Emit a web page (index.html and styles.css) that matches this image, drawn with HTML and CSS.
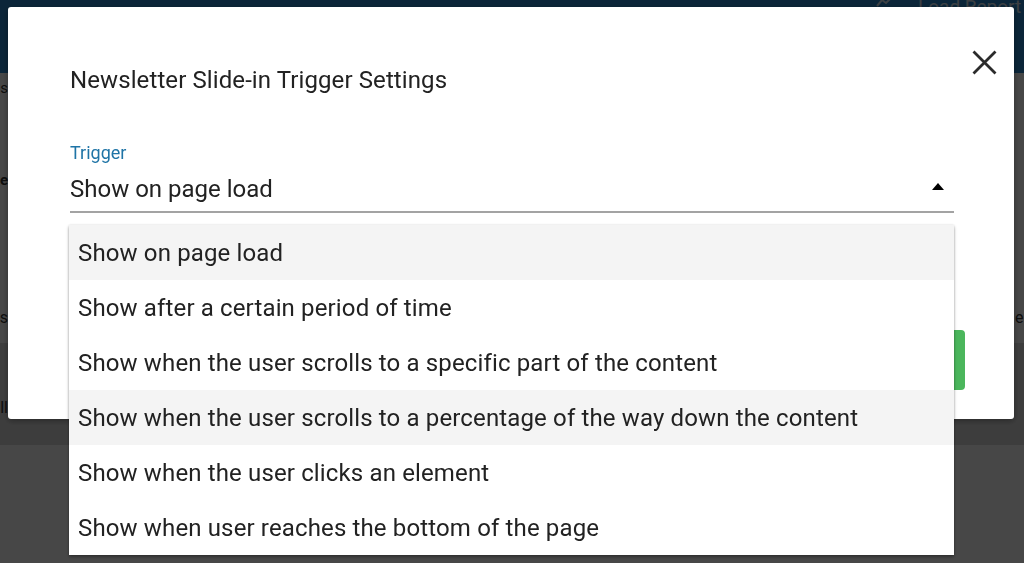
FILE: index.html
```html
<!DOCTYPE html>
<html lang="en">
<head>
<meta charset="utf-8">
<title>Newsletter Slide-in Trigger Settings</title>
<link rel="stylesheet" href="styles.css">
</head>
<body>
  <div class="page">
    <header class="topbar">
      <svg class="topbar-icon" width="18" height="14" viewBox="0 0 18 14" aria-hidden="true"><path d="M1 12 L6 6 L10 9 L17 2" fill="none" stroke="#d8e6f3" stroke-width="2"/></svg>
      <span class="topbar-link">Load Report</span>
    </header>
    <div class="row row-main">
      <div class="edge edge-left">
        <span class="edge-a">s</span>
        <span class="edge-b">e</span>
        <span class="edge-c">s</span>
      </div>
      <div class="middle"></div>
      <div class="edge edge-right">
        <span class="edge-d">e</span>
      </div>
    </div>
    <div class="row row-band">
      <div class="edge edge-left">
        <span class="edge-e">ll</span>
      </div>
    </div>
    <div class="row row-rest"></div>
  </div>

  <div class="overlay">
    <div class="dialog" role="dialog" aria-label="Newsletter Slide-in Trigger Settings">
      <h2 class="dialog-title">Newsletter Slide-in Trigger Settings</h2>
      <button class="dialog-close" aria-label="Close">
        <svg width="25" height="25" viewBox="0 0 25 25"><path d="M1.5 1.5 L23.5 23.5 M23.5 1.5 L1.5 23.5" stroke="#2b2b2b" stroke-width="2.8" fill="none"/></svg>
      </button>
      <div class="field">
        <label class="field-label">Trigger</label>
        <div class="select">
          <span class="select-value">Show on page load</span>
          <span class="caret"></span>
        </div>
        <ul class="menu">
          <li class="menu-item is-selected">Show on page load</li>
          <li class="menu-item">Show after a certain period of time</li>
          <li class="menu-item">Show when the user scrolls to a specific part of the content</li>
          <li class="menu-item is-hover">Show when the user scrolls to a percentage of the way down the content</li>
          <li class="menu-item">Show when the user clicks an element</li>
          <li class="menu-item">Show when user reaches the bottom of the page</li>
        </ul>
      </div>
      <div class="actions">
        <button class="save-btn">Save</button>
      </div>
    </div>
  </div>
</body>
</html>
```
FILE: styles.css
```css
* { box-sizing: border-box; margin: 0; padding: 0; }

html, body {
  width: 1024px;
  height: 563px;
  overflow: hidden;
}

body {
  position: relative;
  font-family: Roboto, "Liberation Sans", sans-serif;
  background: #ffffff;
  color: #222;
}

/* background page */
.page {
  height: 563px;
  display: flex;
  flex-direction: column;
}

.topbar {
  height: 73px;
  flex-shrink: 0;
  background: #2a86cc;
  display: flex;
  align-items: flex-start;
  padding-left: 876px;
  gap: 24px;
  overflow: hidden;
  white-space: nowrap;
}

.topbar-icon { flex-shrink: 0; margin-top: -6px; }

.topbar-link {
  flex-shrink: 0;
  font-size: 19px;
  line-height: 22px;
  margin-top: -4px;
  color: #d6e3ef;
}

.row {
  display: grid;
  grid-template-columns: 8px 1fr 9px;
}

.row-main { height: 270px; }
.row-band { height: 102px; background: #dcdcdc; }
.row-rest { flex: 1; }

.edge {
  display: flex;
  flex-direction: column;
  white-space: nowrap;
  color: #333;
}

.edge-left { align-items: flex-end; }
.edge-right { align-items: flex-start; }

.edge-a { font-size: 15px; line-height: 20px; margin-top: 5px; }
.edge-b { font-size: 15px; line-height: 36px; margin-top: 64px; font-weight: 700; }
.edge-c { font-size: 16px; line-height: 20px; margin-top: 110px; }
.edge-d { font-size: 16px; line-height: 24px; margin-top: 233px; }
.edge-e { font-size: 16px; line-height: 20px; margin-top: 55px; }

/* overlay + dialog */
.overlay {
  position: fixed;
  inset: 0;
  background: rgba(0, 0, 0, 0.72);
}

.dialog {
  position: absolute;
  left: 8px;
  top: 7px;
  width: 1006px;
  height: 412px;
  background: #fff;
  border-radius: 3px;
  box-shadow: 0 2px 6px rgba(0, 0, 0, 0.35);
  padding: 59px 60px 0 62px;
}

.dialog-title {
  font-size: 24px;
  line-height: 28px;
  font-weight: 400;
  letter-spacing: 0.1px;
  color: #222;
}

.dialog-close {
  position: absolute;
  top: 43px;
  right: 17px;
  width: 25px;
  height: 25px;
  border: none;
  background: none;
  display: block;
  cursor: pointer;
}

.dialog-close svg { display: block; }

.field {
  position: relative;
  margin-top: 49px;
}

.field-label {
  display: block;
  font-size: 18px;
  line-height: 20px;
  color: #1f74a6;
}

.select {
  margin-top: 11px;
  display: flex;
  align-items: center;
  justify-content: space-between;
  padding: 0 10px 7px 0;
  border-bottom: 2px solid #a3a3a3;
}

.select-value {
  font-size: 24px;
  line-height: 30px;
  color: #222;
}

.caret {
  width: 0;
  height: 0;
  border-left: 6px solid transparent;
  border-right: 6px solid transparent;
  border-bottom: 7px solid #000;
  margin-bottom: 5px;
}

.menu {
  position: absolute;
  top: calc(100% + 12px);
  left: -1px;
  right: 0;
  list-style: none;
  background: #fff;
  box-shadow: 0 2px 3px rgba(0, 0, 0, 0.35), 0 0 2px rgba(0, 0, 0, 0.12);
  z-index: 2;
}

.menu-item {
  height: 55px;
  display: flex;
  align-items: center;
  padding-left: 9px;
  font-size: 24px;
  letter-spacing: 0.14px;
  color: #222;
  white-space: nowrap;
}

.menu-item.is-selected,
.menu-item.is-hover {
  background: #f4f4f4;
}

.actions {
  margin-top: 117px;
  margin-right: -11px;
  display: flex;
  justify-content: flex-end;
}

.save-btn {
  width: 160px;
  height: 60px;
  border: none;
  border-radius: 4px;
  background: #4bb65c;
  color: #fff;
  font-family: inherit;
  font-size: 20px;
}
```
